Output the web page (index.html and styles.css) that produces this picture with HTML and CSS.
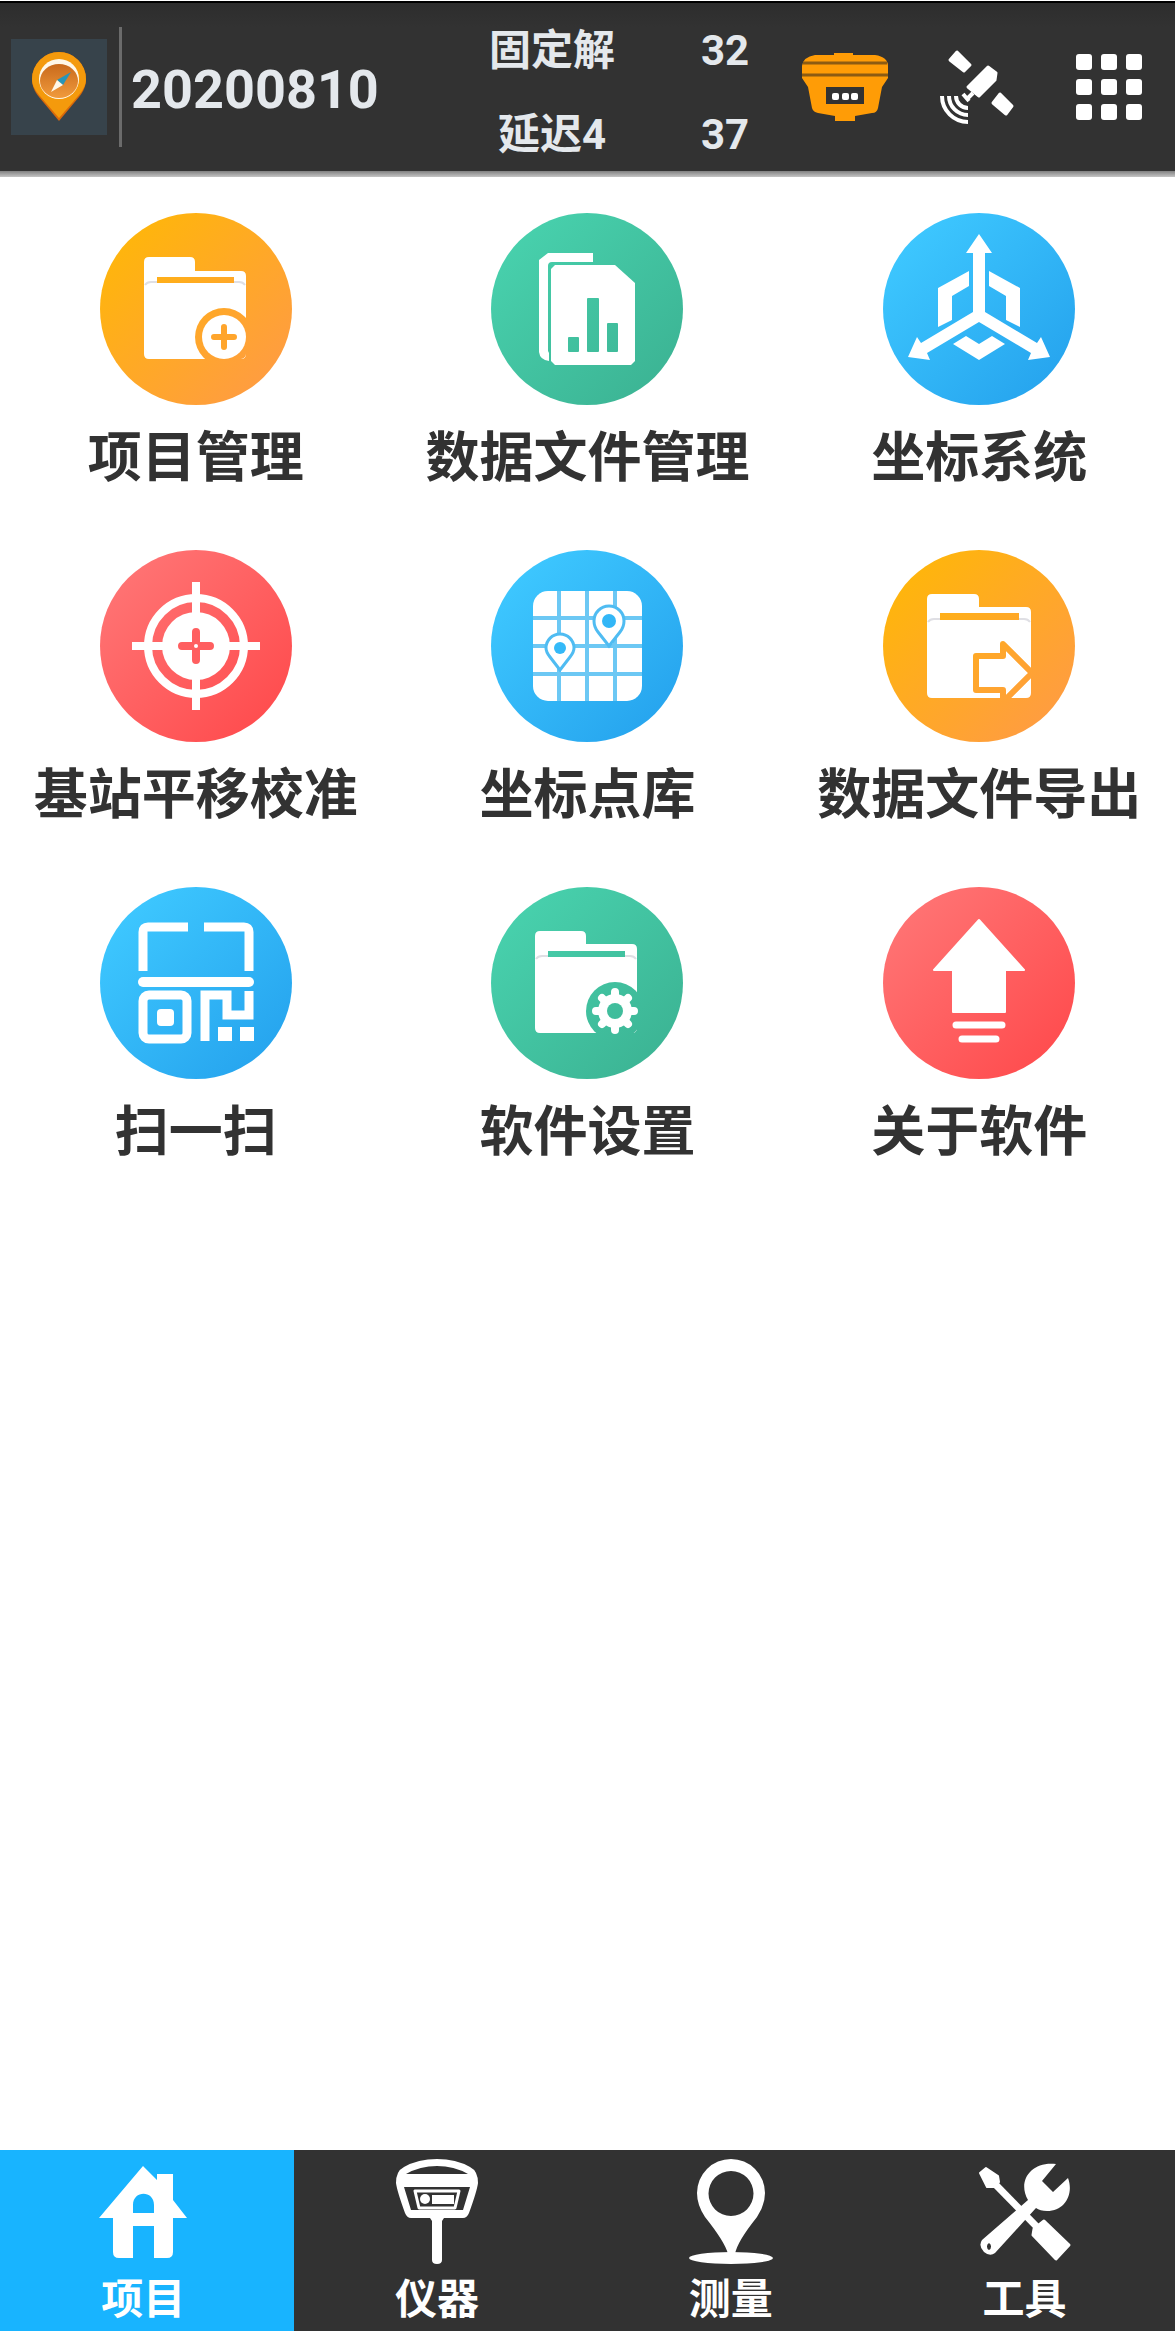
FILE: index.html
```html
<!DOCTYPE html>
<html lang="zh-CN">
<head>
    <meta charset="UTF-8">
    <meta name="viewport" content="width=device-width, initial-scale=1.0">
    <title>项目</title>
    <link rel="stylesheet" href="styles.css">
</head>
<body>
    <!-- Degradados compartidos por los iconos -->
    <svg class="defs" width="0" height="0" aria-hidden="true">
        <defs>
            <linearGradient id="orange" gradientUnits="userSpaceOnUse" x1="20" y1="20" x2="172" y2="172">
                <stop offset="0" stop-color="#ffb60a"/><stop offset="1" stop-color="#ff9c42"/>
            </linearGradient>
            <linearGradient id="green" gradientUnits="userSpaceOnUse" x1="20" y1="20" x2="172" y2="172">
                <stop offset="0" stop-color="#48d1ad"/><stop offset="1" stop-color="#3cb494"/>
            </linearGradient>
            <linearGradient id="blue" gradientUnits="userSpaceOnUse" x1="20" y1="20" x2="172" y2="172">
                <stop offset="0" stop-color="#3ec8ff"/><stop offset="1" stop-color="#26a4ee"/>
            </linearGradient>
            <linearGradient id="red" gradientUnits="userSpaceOnUse" x1="20" y1="20" x2="172" y2="172">
                <stop offset="0" stop-color="#ff7474"/><stop offset="1" stop-color="#ff4c4e"/>
            </linearGradient>
            <linearGradient id="compass" x1="0" y1="0" x2="0" y2="1">
                <stop offset="0" stop-color="#c96a1c"/><stop offset="1" stop-color="#f09a3c"/>
            </linearGradient>
            <clipPath id="folderBox"><rect x="44" y="44" width="102" height="102" rx="5"/></clipPath>
            <clipPath id="exportBox"><rect x="44" y="44" width="104" height="104" rx="5"/></clipPath>
        </defs>
    </svg>

    <header class="topbar">
        <svg class="logo" viewBox="0 0 96 96" aria-hidden="true">
            <rect width="96" height="96" fill="#37434b"/>
            <path d="M48 82 L28 58 C23 52 21 46 21 40 A27 27 0 0 1 75 40 C75 46 73 52 68 58 Z" fill="#d9690a"/>
            <path d="M48 79 L28 56 C23 50 21 45 21 40 A27 27 0 0 1 75 40 C75 45 73 50 68 56 Z" fill="#f49a0c"/>
            <circle cx="48" cy="40" r="20" fill="#fff8e8"/>
            <ellipse cx="48" cy="42" rx="19" ry="17" fill="url(#compass)"/>
            <path d="M60 33 L52 46 L46 41 Z" fill="#2795b8"/>
            <path d="M40 53 L46 41 L52 46 Z" fill="#fff8e8"/>
        </svg>
        <span class="divider"></span>
        <h1 class="project">20200810</h1>
        <div class="status">
            <span>固定解</span>
            <span>32</span>
            <span>延迟4</span>
            <span>37</span>
        </div>
        <button class="tool" aria-label="接收机">
            <svg viewBox="0 0 96 96">
                <path d="M37 16 V14 H56 V16 H78 Q91 18 91 27 V39 L85 48 L81 69 Q80 74 75 74 L58 77 V82 H38 V77 L21 74 Q16 73 15 69 L11 48 L5 39 V27 Q6 18 18 16 Z" fill="#ff9c06"/>
                <path d="M6 24 H90 M5 36 H91" stroke="#8c5b12" stroke-width="3"/>
                <rect x="29" y="48" width="38" height="17" fill="#323232"/>
                <rect x="35" y="54" width="7" height="7" rx="2" fill="#fff"/>
                <rect x="45" y="54" width="7" height="7" rx="2" fill="#fff"/>
                <rect x="54" y="54" width="7" height="7" rx="2" fill="#fff"/>
            </svg>
        </button>
        <button class="tool" aria-label="卫星">
            <svg viewBox="0 0 96 96">
                <g fill="#fff" stroke="#fff" stroke-width="3" stroke-linejoin="round">
                    <path d="M21 21 L28 13 L41 26 L35 32 Z"/>
                    <path d="M59 28 L67 34 L66 41 L50 57 L39 48 Z"/>
                    <path d="M64 64 L71 55 L83 67 L77 75 Z"/>
                </g>
                <path d="M44 54 L38 60 M34 55 L40 62" fill="none" stroke="#fff" stroke-width="4"/>
                <path d="M13 57 A26 26 0 0 0 39 83 M20 57 A19 19 0 0 0 39 76 M27 57 A12 12 0 0 0 39 69" fill="none" stroke="#fff" stroke-width="4"/>
            </svg>
        </button>
        <button class="tool" aria-label="菜单">
            <svg viewBox="0 0 96 96" fill="#fff">
                <rect x="15" y="15" width="16" height="16" rx="3"/>
                <rect x="40" y="15" width="16" height="16" rx="3"/>
                <rect x="65" y="15" width="16" height="16" rx="3"/>
                <rect x="15" y="40" width="16" height="16" rx="3"/>
                <rect x="40" y="40" width="16" height="16" rx="3"/>
                <rect x="65" y="40" width="16" height="16" rx="3"/>
                <rect x="15" y="65" width="16" height="16" rx="3"/>
                <rect x="40" y="65" width="16" height="16" rx="3"/>
                <rect x="65" y="65" width="16" height="16" rx="3"/>
            </svg>
        </button>
    </header>

    <main class="grid">
        <button class="tile">
            <svg viewBox="0 0 192 192">
                <circle cx="96" cy="96" r="96" fill="url(#orange)"/>
                <path d="M49 44 H90 Q95 44 95 49 V58 H141 Q146 58 146 63 V141 Q146 146 141 146 H49 Q44 146 44 141 V49 Q44 44 49 44 Z" fill="#fff"/>
                <path d="M45 72 Q47 69 51 69 H57 M134 69 H139 Q143 69 145 72" fill="none" stroke="#dfdfe4" stroke-width="2"/>
                <rect x="57" y="64" width="77" height="6" fill="url(#orange)"/>
                <g clip-path="url(#folderBox)">
                    <circle cx="124" cy="124" r="29" fill="url(#orange)"/>
                    <circle cx="124" cy="124" r="22" fill="#fff"/>
                </g>
                <path d="M114 124 H134 M124 114 V134" stroke="#ffa52c" stroke-width="6" stroke-linecap="round"/>
            </svg>
            <span>项目管理</span>
        </button>
        <button class="tile">
            <svg viewBox="0 0 192 192">
                <circle cx="96" cy="96" r="96" fill="url(#green)"/>
                <path d="M102 40 H57 L48 47 V139 Q49 147 58 148 V140 L57 138 V53 Q57 49 61 49 H102 Z" fill="#fff"/>
                <path d="M64 52 H124 L144 70 V148 L140 152 H64 L60 148 V56 Z" fill="#fff"/>
                <rect x="77" y="124" width="11" height="15" rx="1" fill="url(#green)"/>
                <rect x="96" y="85" width="12" height="54" rx="1" fill="url(#green)"/>
                <rect x="116" y="110" width="11" height="29" rx="1" fill="url(#green)"/>
            </svg>
            <span>数据文件管理</span>
        </button>
        <button class="tile">
            <svg viewBox="0 0 192 192">
                <circle cx="96" cy="96" r="96" fill="url(#blue)"/>
                <g fill="#fff">
                    <path d="M96 21 L109 40 H102 V99 L154 130 L158 124 L167 144 L145 147 L148 140 L96 109 L44 140 L47 147 L25 144 L34 124 L38 130 L90 99 V40 H83 Z"/>
                    <path d="M86 58 V73 L69 83 V107 L55 114 V75 Z"/>
                    <path d="M106 58 V73 L123 83 V107 L137 114 V75 Z"/>
                    <path d="M70 131 L83 123 L96 131 L109 123 L122 131 L96 147 Z"/>
                </g>
            </svg>
            <span>坐标系统</span>
        </button>

        <button class="tile">
            <svg viewBox="0 0 192 192">
                <circle cx="96" cy="96" r="96" fill="url(#red)"/>
                <circle cx="96" cy="96" r="48" fill="none" stroke="#fff" stroke-width="8"/>
                <circle cx="96" cy="96" r="34" fill="#fff"/>
                <path d="M32 96 H160 M96 32 V160" stroke="#fff" stroke-width="8"/>
                <path d="M82 96 H110 M96 82 V110" stroke="#ff5f60" stroke-width="8" stroke-linecap="round"/>
                <circle cx="96" cy="96" r="2" fill="#fff"/>
            </svg>
            <span>基站平移校准</span>
        </button>
        <button class="tile">
            <svg viewBox="0 0 192 192">
                <circle cx="96" cy="96" r="96" fill="url(#blue)"/>
                <rect x="42" y="41" width="109" height="110" rx="15" fill="#fff"/>
                <path d="M68 41 V151 M96 41 V151 M124 41 V151 M42 68 H151 M42 96 H151 M42 124 H151" stroke="#6cc8f4" stroke-width="4"/>
                <g fill="#fff" stroke="#4fbcf2" stroke-width="3">
                    <path d="M118 96 L107 82 Q103 77 103 71 A15 15 0 0 1 133 71 Q133 77 129 82 Z"/>
                    <path d="M69 120 L59 107 Q55 102 55 98 A14 14 0 0 1 83 98 Q83 102 79 107 Z"/>
                </g>
                <circle cx="118" cy="71" r="7" fill="url(#blue)"/>
                <circle cx="69" cy="98" r="6" fill="url(#blue)"/>
            </svg>
            <span>坐标点库</span>
        </button>
        <button class="tile">
            <svg viewBox="0 0 192 192">
                <circle cx="96" cy="96" r="96" fill="url(#orange)"/>
                <path d="M49 44 H91 Q96 44 96 49 V57 H143 Q148 57 148 62 V143 Q148 148 143 148 H49 Q44 148 44 143 V49 Q44 44 49 44 Z" fill="#fff"/>
                <path d="M45 72 Q47 69 51 69 H57 M136 69 H141 Q145 69 147 72" fill="none" stroke="#dfdfe4" stroke-width="2"/>
                <rect x="57" y="63" width="79" height="7" fill="url(#orange)"/>
                <g clip-path="url(#exportBox)">
                    <path d="M93 106 H120 V94 L149 123 L120 152 V140 H93 Z" fill="#fff" stroke="url(#orange)" stroke-width="6" stroke-linejoin="round"/>
                </g>
            </svg>
            <span>数据文件导出</span>
        </button>

        <button class="tile">
            <svg viewBox="0 0 192 192">
                <circle cx="96" cy="96" r="96" fill="url(#blue)"/>
                <g fill="none" stroke="#fff" stroke-width="9">
                    <path d="M43 84 V45 Q43 40 48 40 H88 M104 40 H144 Q149 40 149 45 V84"/>
                    <path d="M43 95 H149" stroke-width="10" stroke-linecap="round"/>
                    <rect x="43" y="108" width="44" height="44" rx="6"/>
                    <path d="M105 154 V108 H127 V128 H149 V104"/>
                </g>
                <rect x="57" y="122" width="17" height="17" rx="4" fill="#fff"/>
                <path d="M118 140 H132 V154 H118 Z M140 140 H154 V154 H140 Z" fill="#fff"/>
            </svg>
            <span>扫一扫</span>
        </button>
        <button class="tile">
            <svg viewBox="0 0 192 192">
                <circle cx="96" cy="96" r="96" fill="url(#green)"/>
                <path d="M49 44 H90 Q95 44 95 49 V57 H141 Q146 57 146 62 V141 Q146 146 141 146 H49 Q44 146 44 141 V49 Q44 44 49 44 Z" fill="#fff"/>
                <path d="M45 72 Q47 69 51 69 H57 M134 69 H139 Q143 69 145 72" fill="none" stroke="#dfdfe4" stroke-width="2"/>
                <rect x="57" y="64" width="77" height="6" fill="url(#green)"/>
                <circle cx="124" cy="124" r="29" fill="url(#green)"/>
                <g stroke="#fff" stroke-width="8" stroke-linecap="round">
                    <path d="M124 105 V143 M105 124 H143 M111 111 L137 137 M137 111 L111 137"/>
                </g>
                <circle cx="124" cy="124" r="17" fill="#fff"/>
                <circle cx="124" cy="124" r="8" fill="url(#green)"/>
            </svg>
            <span>软件设置</span>
        </button>
        <button class="tile">
            <svg viewBox="0 0 192 192">
                <circle cx="96" cy="96" r="96" fill="url(#red)"/>
                <path d="M96 33 L141 83 H122 V125 H70 V83 H51 Z" fill="#fff" stroke="#fff" stroke-width="2" stroke-linejoin="round"/>
                <path d="M73 138 H119 M79 152 H113" stroke="#fff" stroke-width="7" stroke-linecap="round"/>
            </svg>
            <span>关于软件</span>
        </button>
    </main>

    <nav class="tabs">
        <a href="#project" class="tab active">
            <svg viewBox="0 0 96 108">
                <path fill="#fff" fill-rule="evenodd" d="M48 7 L62 21 V15 H78 V41 L92 59 H78 V93 Q78 99 72 99 H59 V67 H38 V99 H24 Q18 99 18 93 V59 H4 Z M38 54 H59 V46 C59 31 38 31 38 46 Z"/>
            </svg>
            <span>项目</span>
        </a>
        <a href="#device" class="tab">
            <svg viewBox="0 0 96 108">
                <path fill="#fff" fill-rule="evenodd" d="M7 24 Q7 12 15 8 Q29 0 48 0 Q67 0 81 8 Q89 12 89 24 Q88 32 80 54 Q78 59 74 59 H55 L53 62 V101 Q53 105 48 105 Q43 105 43 101 V62 L41 59 H22 Q18 59 16 54 Q8 32 7 24 Z M17 15 H79 Q65 7 48 7 Q31 7 17 15 Z M15 28 L22 51 H74 L81 28 Z"/>
                <path fill="none" stroke="#fff" stroke-width="3" stroke-linejoin="round" d="M26 32 H70 L66 49 H30 Z"/>
                <circle cx="36" cy="40" r="5" fill="#fff"/>
                <rect x="43" y="36" width="22" height="9" fill="#fff"/>
            </svg>
            <span>仪器</span>
        </a>
        <a href="#survey" class="tab">
            <svg viewBox="0 0 96 108">
                <path fill="#fff" fill-rule="evenodd" d="M45 95 Q42 83 22 58 Q14 46 14 34 A34 34 0 0 1 82 34 Q82 46 74 58 Q54 83 52 95 Z M48 12 A22 22 0 0 0 48 57 A22 22 0 0 0 48 12 Z"/>
                <ellipse cx="48" cy="99" rx="42" ry="6" fill="#fff"/>
            </svg>
            <span>测量</span>
        </a>
        <a href="#tools" class="tab">
            <svg viewBox="0 0 96 108">
                <path fill="#fff" fill-rule="evenodd" d="M79 5 L65 22 L76 33 L91 19 C97 35 88 52 70 52 Q63 52 59 49 L18 94 Q13 98 7 93 Q1 87 5 81 L51 41 C40 22 54 2 79 5 Z M12 84 A4 4 0 0 0 12 91 A4 4 0 0 0 12 84 Z"/>
                <path fill="#fff" stroke="#fff" stroke-width="2" stroke-linejoin="round" d="M3 14 L9 9 L21 17 L22 23 L17 28 H10 Z"/>
                <path d="M18 25 L61 69" stroke="#fff" stroke-width="7"/>
                <path fill="#fff" stroke="#fff" stroke-width="3" stroke-linejoin="round" d="M57 70 L67 62 L92 86 L79 100 L56 76 Z"/>
            </svg>
            <span>工具</span>
        </a>
    </nav>
</body>
</html>
```

FILE: styles.css
```css
* {
    box-sizing: border-box;
}
body {
    display: flex;
    flex-direction: column;
    min-height: 100vh;
    margin: 0;
    padding: 1px 1px 1px 0;
    background-color: #fff;
    color: #323232;
    font-family: "Noto Sans CJK SC", sans-serif;
    font-weight: bold;
}
button {
    padding: 0;
    border: 0;
    background: none;
    color: inherit;
    font: inherit;
    cursor: pointer;
}
svg {
    display: block;
}
.defs {
    position: absolute;
}

/* Barra superior */
.topbar {
    display: flex;
    align-items: center;
    height: 176px;
    padding: 0 18px 6px 11px;
    border-top: 2px solid #000;
    background: linear-gradient(to top, #c4c4c4, #808080 6px, #323232 6px, #323232 150px, #2d2d2d);
    color: #e4e8ec;
    font-family: Roboto, "Noto Sans CJK SC", sans-serif;
}
.logo {
    width: 96px;
    height: 96px;
}
.divider {
    width: 3px;
    height: 120px;
    margin: 0 9px 0 12px;
    background-color: #6b6b6b;
}
.project {
    flex: 1;
    margin: 0;
    padding-top: 6px;
    font-size: 54px;
    line-height: 64px;
}
.status {
    display: grid;
    grid-template-columns: 172px 144px;
    column-gap: 15px;
    padding-top: 12px;
    font-size: 42px;
    line-height: 84px;
    text-align: center;
}
.tool svg {
    width: 96px;
    height: 96px;
}
.tool + .tool {
    margin-left: 36px;
}

/* Cuadrícula de funciones */
.grid {
    flex: 1;
    display: grid;
    grid-template-columns: repeat(3, 1fr);
    align-content: start;
    row-gap: 64px;
    padding: 36px 0;
}
.tile {
    display: flex;
    flex-direction: column;
    align-items: center;
    gap: 17px;
    font-size: 54px;
    line-height: 64px;
    white-space: nowrap;
}
.tile svg {
    width: 192px;
    height: 192px;
}

/* Navegación inferior */
.tabs {
    display: grid;
    grid-template-columns: repeat(4, 1fr);
    background-color: #323232;
}
.tab {
    display: flex;
    flex-direction: column;
    align-items: center;
    height: 181px;
    padding: 9px 7px 0 0;
    color: #fff;
    font-size: 42px;
    line-height: 58px;
    text-decoration: none;
}
.tab svg {
    width: 96px;
    height: 108px;
}
.tab.active {
    background-color: #18b4ff;
}
```
